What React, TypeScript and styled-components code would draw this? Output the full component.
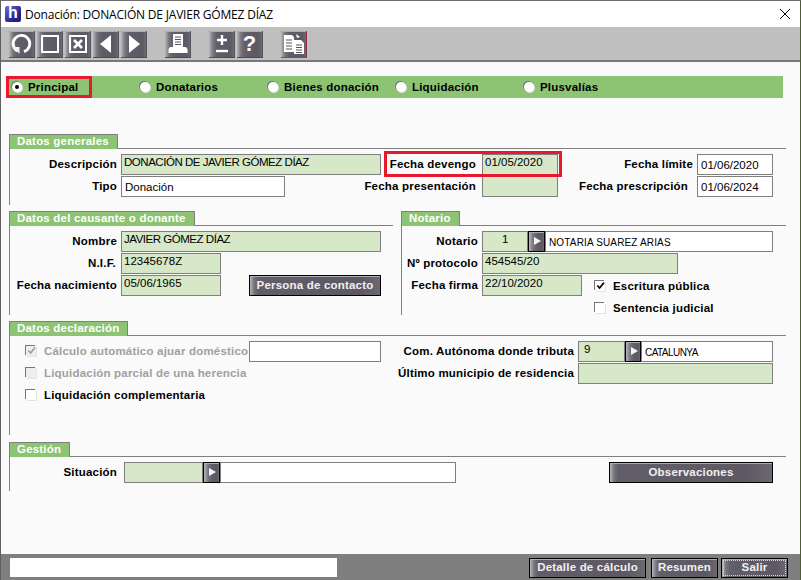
import React from 'react';
import styled, { createGlobalStyle } from 'styled-components';

const GlobalStyle = createGlobalStyle`
  html, body {
    margin: 0;
    padding: 0;
    background: #fafafa;
  }
  * {
    box-sizing: border-box;
  }
`;

const buttonFace = `
  background: linear-gradient(90deg, #b8b7bb 0, #77747d 4px, #625e69 8px, #5d5964 85%, #6c6972 100%);
  box-shadow: inset 0 1px 0 #aeadb1;
`;

const Window = styled.div`
  width: 801px;
  height: 580px;
  display: flex;
  flex-direction: column;
  overflow: hidden;
  background: #fafafa;
  border-left: 1px solid #606060;
  border-top: 1px solid #707070;
  border-right: 1px solid #4c5a35;
  font-family: 'Liberation Sans', Arial, sans-serif;
  font-size: 12px;
  color: #000;
`;

const TitleBar = styled.div`
  height: 26px;
  flex: none;
  display: flex;
  align-items: center;
  padding: 0 10px 0 4px;
  background: #fff;
`;

const AppLogo = styled.div`
  width: 16px;
  height: 16px;
  margin-right: 4px;
  border-radius: 2px;
  background: linear-gradient(135deg, #6d6fd8, #23208c 70%);
  color: #fff;
  font-weight: bold;
  font-size: 16px;
  line-height: 14px;
  text-align: center;
`;

const TitleText = styled.div`
  flex: 1;
  font-family: 'Open Sans', sans-serif;
  font-size: 12px;
  letter-spacing: -0.2px;
`;

const Toolbar = styled.div`
  height: 35px;
  flex: none;
  display: flex;
  align-items: flex-start;
  padding: 4px 0 0 8px;
  background: #bfbfbf;
  border-bottom: 2px solid #777;
`;

const ToolButton = styled.div<{ $gap?: number; $accent?: boolean }>`
  width: 26px;
  height: 27px;
  margin-left: ${(p) => p.$gap ?? 2}px;
  display: flex;
  align-items: center;
  justify-content: center;
  color: #fff;
  font-size: 22px;
  font-weight: bold;
  ${buttonFace}
  border-right: 1px solid ${(p) => (p.$accent ? '#8c2a3c' : '#56535c')};
  border-bottom: 1px solid ${(p) => (p.$accent ? '#3f6e45' : '#4c4952')};
`;

const Content = styled.div`
  flex: 1;
  padding: 14px 0 0 8px;
`;

const TabBar = styled.div`
  position: relative;
  width: 774px;
  height: 22px;
  display: flex;
  padding-left: 2px;
  background: #8cc473;
`;

const TabItem = styled.div`
  width: 128px;
  display: flex;
  align-items: center;
  gap: 6px;
  font-weight: bold;
  font-size: 11.5px;
  letter-spacing: 0.2px;
`;

const Radio = styled.span<{ $on?: boolean }>`
  position: relative;
  width: 10px;
  height: 10px;
  flex: none;
  margin-left: 1px;
  border-radius: 50%;
  background: #fff;
  box-shadow: -1px -1px 0 #777, 1px 1px 0 #e4e4e4;

  &::after {
    content: '';
    display: ${(p) => (p.$on ? 'block' : 'none')};
    position: absolute;
    left: 3px;
    top: 3px;
    width: 4px;
    height: 4px;
    border-radius: 50%;
    background: #000;
  }
`;

const RedMark = styled.div`
  position: absolute;
  left: -3px;
  top: 0;
  width: 86px;
  height: 22px;
  border: 3px solid #e8192f;
`;

const Section = styled.section<{ $width?: number; $height: number; $top: number }>`
  width: ${(p) => p.$width ?? 777}px;
  height: ${(p) => p.$height}px;
  margin-top: ${(p) => p.$top}px;
  flex: none;
  border-left: 1px solid #7f7f7f;
`;

const SectionHead = styled.div`
  display: flex;
  height: 15px;
  margin-left: -1px;
  margin-bottom: 5px;
`;

const SectionTab = styled.div`
  padding: 0 8px 0 7px;
  height: 15px;
  background: #8cc473;
  border: 1px solid #7f7f7f;
  border-bottom: none;
  color: #fff;
  font-weight: bold;
  font-size: 11.5px;
  line-height: 13px;
  letter-spacing: 0.2px;
  white-space: nowrap;
`;

const SectionLine = styled.div`
  flex: 1;
  border-bottom: 1px solid #7f7f7f;
`;

const SectionPair = styled.div`
  display: flex;
  gap: 8px;
`;

const Row = styled.div`
  display: flex;
  height: 21px;
  margin-bottom: 1px;
`;

const Label = styled.div<{ $w: number; $pad?: number }>`
  width: ${(p) => p.$w}px;
  flex: none;
  padding-right: ${(p) => p.$pad ?? 4}px;
  font-weight: bold;
  font-size: 11.5px;
  line-height: 21px;
  letter-spacing: 0.2px;
  white-space: nowrap;
  display: flex;
  justify-content: flex-end;
`;

const Field = styled.div<{ $w: number; $white?: boolean; $indent?: number; $push?: boolean; $tight?: boolean }>`
  width: ${(p) => p.$w}px;
  flex: none;
  height: 21px;
  margin-left: ${(p) => (p.$push ? 'auto' : '0')};
  padding: ${(p) => (p.$white ? '3px 3px 0 3px' : '0 1px 0 2px')};
  background: ${(p) => (p.$white ? '#fff' : '#d6e8c8')};
  border: 1px solid #7f7f7f;
  font-size: 11.5px;
  line-height: 15px;
  letter-spacing: ${(p) => (p.$tight ? '-0.47px' : '0')};
  text-indent: ${(p) => p.$indent ?? 0}px;
  white-space: nowrap;
  overflow: hidden;
`;

const Spaced = styled.span<{ $ls: number }>`
  font-size: 10px;
  letter-spacing: ${(p) => p.$ls}px;
`;

const Marked = styled.div`
  position: relative;
  display: flex;
`;

const MarkBox = styled.div`
  position: absolute;
  left: 3px;
  top: -3px;
  width: 178px;
  height: 26px;
  border: 3px solid #e8192f;
  pointer-events: none;
`;

const ArrowButton = styled.div<{ $w?: number }>`
  position: relative;
  width: ${(p) => p.$w ?? 17}px;
  height: 21px;
  flex: none;
  ${buttonFace}
  border: 1px solid #000;

  &::after {
    content: '';
    position: absolute;
    left: 5px;
    top: 5px;
    border-left: 7px solid #f4f4f4;
    border-top: 4px solid transparent;
    border-bottom: 4px solid transparent;
  }
`;

const BigButton = styled.div<{ $w: number; $ml?: number; $h?: number; $focus?: boolean }>`
  position: relative;
  width: ${(p) => p.$w}px;
  height: ${(p) => p.$h ?? 21}px;
  margin-left: ${(p) => p.$ml ?? 0}px;
  flex: none;
  ${buttonFace}
  border: 1px solid #000;
  color: #f0f0f0;
  font-weight: bold;
  font-size: 11.5px;
  line-height: ${(p) => (p.$h ?? 21) - 3}px;
  letter-spacing: 0.2px;
  text-align: center;
  white-space: nowrap;

  &::after {
    content: '';
    display: ${(p) => (p.$focus ? 'block' : 'none')};
    position: absolute;
    inset: 1px;
    border: 1px dotted #d8d8c8;
  }
`;

const CheckRow = styled.div<{ $ml: number; $muted?: boolean; $raise?: boolean }>`
  display: flex;
  align-items: center;
  gap: 8px;
  height: 21px;
  margin-left: ${(p) => p.$ml}px;
  padding-bottom: ${(p) => (p.$raise ? 2 : 0)}px;
  font-weight: bold;
  font-size: 11.5px;
  letter-spacing: 0.2px;
  white-space: nowrap;
  color: ${(p) => (p.$muted ? '#a0a0a0' : '#000')};
`;

const Box = styled.span<{ $muted?: boolean }>`
  width: 10px;
  height: 10px;
  flex: none;
  display: flex;
  align-items: center;
  justify-content: center;
  background: ${(p) => (p.$muted ? '#eeeeee' : '#fff')};
  box-shadow: -1px -1px 0 #777, 1px 1px 0 #e4e4e4;
  margin-left: 2px;
`;

const DeclarationBody = styled.div`
  display: flex;
`;

const DeclarationLeft = styled.div`
  width: 371px;
  flex: none;
`;

const DeclarationRight = styled.div`
  flex: 1;
`;

const StatusBar = styled.div`
  height: 26px;
  flex: none;
  display: flex;
  padding: 4px 0 0 9px;
  background: #7f7f7f;
`;

const StatusInput = styled.div`
  width: 327px;
  height: 19px;
  background: #fff;
  margin-right: 192px;
`;

const Check = ({ color = '#000' }: { color?: string }) => (
  <svg width="9" height="9" viewBox="0 0 10 10">
    <path d="M1.5 5 L4 7.8 L8.8 1.8" fill="none" stroke={color} strokeWidth="1.8" />
  </svg>
);

const CloseIcon = () => (
  <svg width="10" height="10" viewBox="0 0 10 10">
    <path d="M0 0 L10 10 M10 0 L0 10" stroke="#000" strokeWidth="1" />
  </svg>
);

const ReloadIcon = () => (
  <svg width="22" height="24" viewBox="0 0 22 24">
    <path d="M6.5 19 A8.3 8.3 0 1 1 13 19.6" fill="none" stroke="#fff" strokeWidth="2.8" />
    <path d="M2 15 L8.5 15 L8.5 22 Z" fill="#f2f2f2" />
  </svg>
);

const StopIcon = () => (
  <svg width="20" height="20" viewBox="0 0 20 20">
    <rect x="2" y="2" width="16" height="16" fill="none" stroke="#fff" strokeWidth="2" />
  </svg>
);

const CancelIcon = () => (
  <svg width="20" height="20" viewBox="0 0 20 20">
    <rect x="2" y="2" width="16" height="16" fill="none" stroke="#fff" strokeWidth="2" />
    <path d="M6 6 L14 14 M14 6 L6 14" stroke="#fff" strokeWidth="2.6" />
  </svg>
);

const PrevIcon = () => (
  <svg width="14" height="20" viewBox="0 0 14 20">
    <path d="M12 1 L12 19 L1 10 Z" fill="#fff" />
  </svg>
);

const NextIcon = () => (
  <svg width="14" height="20" viewBox="0 0 14 20">
    <path d="M2 1 L2 19 L13 10 Z" fill="#fff" />
  </svg>
);

const PrintIcon = () => (
  <svg width="22" height="22" viewBox="0 0 22 22">
    <path d="M6 1 H16 V14 H6 Z" fill="#fff" />
    <path d="M8 4 H14 M8 6.5 H14 M8 9 H14 M8 11.5 H14" stroke="#56535c" strokeWidth="1" />
    <path d="M3 14 H19 L20.5 16 V20 H1.5 V16 Z" fill="#fff" />
  </svg>
);

const PlusMinusIcon = () => (
  <svg width="16" height="22" viewBox="0 0 16 22">
    <path d="M8 2 V12 M3 7 H13" stroke="#fff" strokeWidth="2.4" />
    <path d="M2 18 H14" stroke="#fff" strokeWidth="2.4" />
  </svg>
);

const DocsIcon = () => (
  <svg width="24" height="24" viewBox="0 0 24 24">
    <path d="M2 3 H10 L12 5 V20 H2 Z" fill="#fff" />
    <path d="M4 8 H10 M4 11 H10 M4 14 H10 M4 17 H10" stroke="#56535c" strokeWidth="1" />
    <path d="M12 8 H19 L22 11 V22 H12 Z" fill="#fff" />
    <path d="M14 13 H20 M14 15.5 H20 M14 18 H20 M14 20.5 H20" stroke="#56535c" strokeWidth="1" />
    <path d="M14 2 L18 5 L15 6 Z" fill="#fff" />
  </svg>
);

const App = () => (
  <>
    <GlobalStyle />
    <Window>
      <TitleBar>
        <AppLogo>h</AppLogo>
        <TitleText>Donación: DONACIÓN DE JAVIER GÓMEZ DÍAZ</TitleText>
        <CloseIcon />
      </TitleBar>

      <Toolbar>
        <ToolButton $gap={0}><ReloadIcon /></ToolButton>
        <ToolButton><StopIcon /></ToolButton>
        <ToolButton><CancelIcon /></ToolButton>
        <ToolButton><PrevIcon /></ToolButton>
        <ToolButton><NextIcon /></ToolButton>
        <ToolButton $gap={18}><PrintIcon /></ToolButton>
        <ToolButton $gap={18}><PlusMinusIcon /></ToolButton>
        <ToolButton>?</ToolButton>
        <ToolButton $gap={18} $accent><DocsIcon /></ToolButton>
      </Toolbar>

      <Content>
        <TabBar>
          <RedMark />
          <TabItem><Radio $on />Principal</TabItem>
          <TabItem><Radio />Donatarios</TabItem>
          <TabItem><Radio />Bienes donación</TabItem>
          <TabItem><Radio />Liquidación</TabItem>
          <TabItem><Radio />Plusvalías</TabItem>
        </TabBar>

        <Section $height={71} $top={36}>
          <SectionHead>
            <SectionTab>Datos generales</SectionTab>
            <SectionLine />
          </SectionHead>
          <Row>
            <Label $w={111}>Descripción</Label>
            <Field $w={260} $tight>DONACIÓN DE JAVIER GÓMEZ DÍAZ</Field>
            <Marked>
              <MarkBox />
              <Label $w={101} $pad={6}>Fecha devengo</Label>
              <Field $w={76}>01/05/2020</Field>
            </Marked>
            <Label $w={139}>Fecha límite</Label>
            <Field $w={76} $white>01/06/2020</Field>
          </Row>
          <Row>
            <Label $w={111}>Tipo</Label>
            <Field $w={164} $white>Donación</Field>
            <Label $w={197} $pad={6}>Fecha presentación</Label>
            <Field $w={76} />
            <Label $w={139} $pad={9}>Fecha prescripción</Label>
            <Field $w={76} $white>01/06/2024</Field>
          </Row>
        </Section>

        <SectionPair>
          <Section $width={384} $height={104} $top={6}>
            <SectionHead>
              <SectionTab>Datos del causante o donante</SectionTab>
              <SectionLine />
            </SectionHead>
            <Row>
              <Label $w={111}>Nombre</Label>
              <Field $w={260} $tight>JAVIER GÓMEZ DÍAZ</Field>
            </Row>
            <Row>
              <Label $w={111} $pad={5}>N.I.F.</Label>
              <Field $w={100}>12345678Z</Field>
            </Row>
            <Row>
              <Label $w={111}>Fecha nacimiento</Label>
              <Field $w={100}>05/06/1965</Field>
              <BigButton $w={132} $ml={28}>Persona de contacto</BigButton>
            </Row>
          </Section>

          <Section $width={385} $height={104} $top={6}>
            <SectionHead>
              <SectionTab>Notario</SectionTab>
              <SectionLine />
            </SectionHead>
            <Row>
              <Label $w={80}>Notario</Label>
              <Field $w={46} $indent={17}>1</Field>
              <ArrowButton />
              <Field $w={228} $white><Spaced $ls={0.15}>NOTARIA SUAREZ ARIAS</Spaced></Field>
            </Row>
            <Row>
              <Label $w={80}>Nº protocolo</Label>
              <Field $w={196}>454545/20</Field>
            </Row>
            <Row>
              <Label $w={80}>Fecha firma</Label>
              <Field $w={100}>22/10/2020</Field>
              <CheckRow $ml={11}><Box><Check /></Box>Escritura pública</CheckRow>
            </Row>
            <Row>
              <CheckRow $ml={191}><Box />Sentencia judicial</CheckRow>
            </Row>
          </Section>
        </SectionPair>

        <Section $height={114} $top={6}>
          <SectionHead>
            <SectionTab>Datos declaración</SectionTab>
            <SectionLine />
          </SectionHead>
          <DeclarationBody>
            <DeclarationLeft>
              <Row>
                <CheckRow $ml={14} $muted $raise><Box $muted><Check color="#a0a0a0" /></Box>Cálculo automático ajuar doméstico</CheckRow>
                <Field $w={132} $white $push />
              </Row>
              <Row>
                <CheckRow $ml={14} $muted $raise><Box $muted />Liquidación parcial de una herencia</CheckRow>
              </Row>
              <Row>
                <CheckRow $ml={14} $raise><Box />Liquidación complementaria</CheckRow>
              </Row>
            </DeclarationLeft>
            <DeclarationRight>
              <Row>
                <Label $w={197}>Com. Autónoma donde tributa</Label>
                <Field $w={47} $indent={3}>9</Field>
                <ArrowButton $w={16} />
                <Field $w={132} $white><Spaced $ls={-0.55}>CATALUNYA</Spaced></Field>
              </Row>
              <Row>
                <Label $w={197}>Último municipio de residencia</Label>
                <Field $w={195} />
              </Row>
            </DeclarationRight>
          </DeclarationBody>
        </Section>

        <Section $height={49} $top={7}>
          <SectionHead>
            <SectionTab>Gestión</SectionTab>
            <SectionLine />
          </SectionHead>
          <Row>
            <Label $w={114} $pad={7}>Situación</Label>
            <Field $w={79} />
            <ArrowButton />
            <Field $w={236} $white />
            <BigButton $w={164} $ml={153}>Observaciones</BigButton>
          </Row>
        </Section>
      </Content>

      <StatusBar>
        <StatusInput />
        <BigButton $w={117} $h={20}>Detalle de cálculo</BigButton>
        <BigButton $w={67} $h={20} $ml={5}>Resumen</BigButton>
        <BigButton $w={67} $h={20} $ml={3} $focus>Salir</BigButton>
      </StatusBar>
    </Window>
  </>
);

export default App;
